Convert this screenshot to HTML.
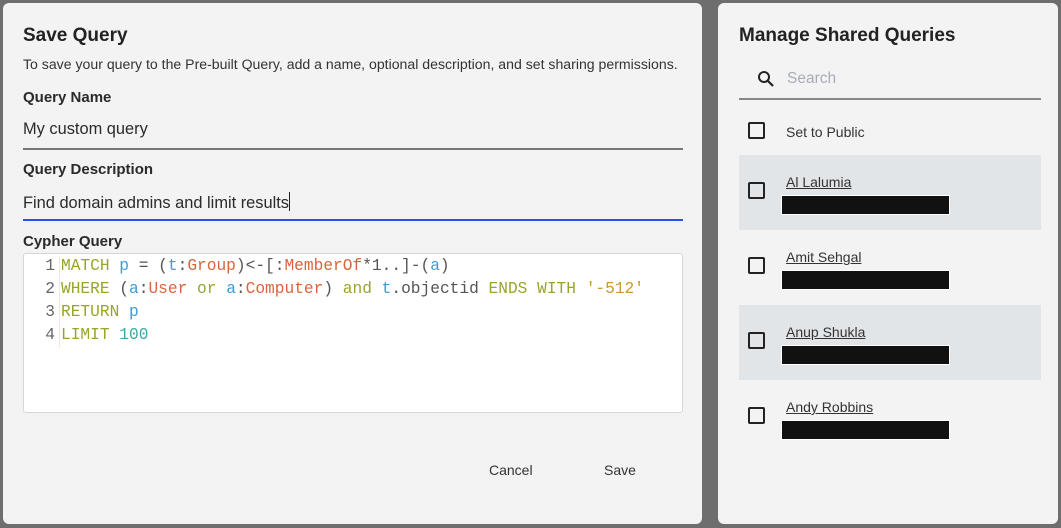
<!DOCTYPE html>
<html><head><style>
*{margin:0;padding:0;box-sizing:border-box}
body{width:1061px;height:528px;background:#6e6e6e;font-family:"Liberation Sans",sans-serif;position:relative;overflow:hidden;color:#222}
.p{position:absolute;background:#f3f3f3;border-radius:6px}
.a{position:absolute;white-space:nowrap}
.h{font-size:19px;font-weight:bold;color:#222}
.lb{font-size:15px;font-weight:bold;color:#2a2a2a}
.in{font-size:16.4px;color:#2a2a2a}
.code{position:absolute;left:23px;top:253px;width:660px;height:160px;background:#fff;border:1px solid #d6d6d6;border-radius:3px;font-family:"Liberation Mono",monospace;font-size:16.2px}
.ln{position:absolute;left:0;top:1px;width:31px;text-align:right;color:#666;line-height:23px}
.gut{position:absolute;left:35px;top:2px;width:1px;height:92px;background:#f5e9c6}
.cl{position:absolute;left:37px;top:1px;line-height:23px;color:#555;white-space:pre}
.k{color:#98a529}.v{color:#3f9bd6}.t{color:#d9643e}.n{color:#3aaaa8}.s{color:#c99b2a}
.cb{position:absolute;width:17px;height:17px;border:2px solid #222;border-radius:2px}
.row{position:absolute;left:739px;width:302px;height:75px}
.nm{position:absolute;left:47px;font-size:14px;color:#333;text-decoration:underline}
.red{position:absolute;left:42px;width:169px;height:20px;background:#111;border:1px solid #fff}
</style></head><body>
<div class="p" style="left:3px;top:3px;width:699px;height:521px"></div>
<div class="p" style="left:718px;top:3px;width:340px;height:521px"></div>

<div class="a h" style="left:23px;top:25px">Save Query</div>
<div class="a" style="left:23px;top:56px;font-size:14.1px;color:#333">To save your query to the Pre-built Query, add a name, optional description, and set sharing permissions.</div>
<div class="a lb" style="left:23px;top:89px">Query Name</div>
<div class="a in" style="left:23px;top:120px">My custom query</div>
<div class="a" style="left:23px;top:148px;width:660px;height:2px;background:#777"></div>
<div class="a lb" style="left:23px;top:161px">Query Description</div>
<div class="a in" style="left:23px;top:192px">Find domain admins and limit results<span style="display:inline-block;width:1px;height:19px;background:#222;vertical-align:-3px"></span></div>
<div class="a" style="left:23px;top:219px;width:660px;height:2px;background:#2b4ff0"></div>
<div class="a lb" style="left:23px;top:233px">Cypher Query</div>
<div class="code">
<div class="ln">1<br>2<br>3<br>4</div>
<div class="gut"></div>
<div class="cl"><span class="k">MATCH</span> <span class="v">p</span> = (<span class="v">t</span>:<span class="t">Group</span>)&lt;-[:<span class="t">MemberOf</span>*1..]-(<span class="v">a</span>)
<span class="k">WHERE</span> (<span class="v">a</span>:<span class="t">User</span> <span class="k">or</span> <span class="v">a</span>:<span class="t">Computer</span>) <span class="k">and</span> <span class="v">t</span>.objectid <span class="k">ENDS WITH</span> <span class="s">'-512'</span>
<span class="k">RETURN</span> <span class="v">p</span>
<span class="k">LIMIT</span> <span class="n">100</span></div>
</div>
<div class="a" style="left:489px;top:462px;font-size:14px;color:#333">Cancel</div>
<div class="a" style="left:604px;top:462px;font-size:14px;color:#333">Save</div>

<div class="a h" style="left:739px;top:25px">Manage Shared Queries</div>
<svg class="a" style="left:757px;top:70px" width="18" height="18" viewBox="0 0 18 18"><circle cx="7" cy="7" r="5" fill="none" stroke="#222" stroke-width="2"/><line x1="10.5" y1="10.5" x2="16" y2="16" stroke="#222" stroke-width="2.2"/></svg>
<div class="a" style="left:787px;top:70px;font-size:15.5px;color:#a8adb5">Search</div>
<div class="a" style="left:739px;top:98px;width:302px;height:2px;background:#888"></div>
<div class="cb" style="left:748px;top:122px"></div>
<div class="a" style="left:786px;top:124px;font-size:14px;color:#333">Set to Public</div>

<div class="row" style="top:155px;background:#e2e5e8"><div class="cb" style="left:9px;top:27px"></div><div class="nm" style="top:19px">Al Lalumia</div><div class="red" style="top:40px"></div></div>
<div class="row" style="top:230px"><div class="cb" style="left:9px;top:27px"></div><div class="nm" style="top:19px">Amit Sehgal</div><div class="red" style="top:40px"></div></div>
<div class="row" style="top:305px;background:#e2e5e8"><div class="cb" style="left:9px;top:27px"></div><div class="nm" style="top:19px">Anup Shukla</div><div class="red" style="top:40px"></div></div>
<div class="row" style="top:380px"><div class="cb" style="left:9px;top:27px"></div><div class="nm" style="top:19px">Andy Robbins</div><div class="red" style="top:40px"></div></div>
</body></html>
